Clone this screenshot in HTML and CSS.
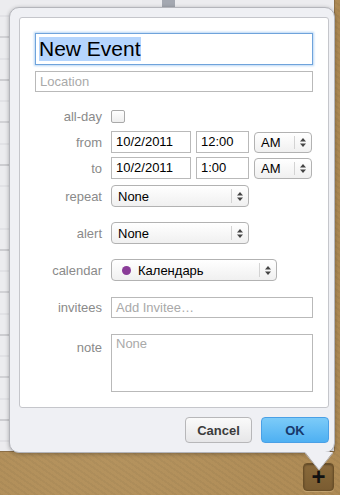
FILE: index.html
```html
<!DOCTYPE html>
<html lang="en">
<head>
    <meta charset="UTF-8">
    <meta name="viewport" content="width=device-width, initial-scale=1.0">
    <title>New Event</title>

    <link rel="stylesheet" href="styles.css">
</head>
<body>

    <div class="calendar">
        <div class="scroll-thumb"></div>
    </div>

    <div class="toolbar">
        <button class="add-btn">+</button>
    </div>

    <div class="popover">
        <div class="panel">
            <div class="title-field"><span class="selected">New Event</span></div>
            <div class="input location placeholder">Location</div>

            <div class="row allday">
                <span class="label">all-day</span>
                <span class="checkbox"></span>
            </div>

            <div class="row from">
                <span class="label">from</span>
                <div class="controls">
                    <div class="input date">10/2/2011</div>
                    <div class="input time">12:00</div>
                    <div class="select ampm"><span class="value">AM</span><span class="stepper"></span></div>
                </div>
            </div>

            <div class="row to">
                <span class="label">to</span>
                <div class="controls">
                    <div class="input date">10/2/2011</div>
                    <div class="input time">1:00</div>
                    <div class="select ampm"><span class="value">AM</span><span class="stepper"></span></div>
                </div>
            </div>

            <div class="row repeat">
                <span class="label">repeat</span>
                <div class="controls">
                    <div class="select wide"><span class="value">None</span><span class="stepper"></span></div>
                </div>
            </div>

            <div class="row alert">
                <span class="label">alert</span>
                <div class="controls">
                    <div class="select wide"><span class="value">None</span><span class="stepper"></span></div>
                </div>
            </div>

            <div class="row cal">
                <span class="label">calendar</span>
                <div class="controls">
                    <div class="select cal-select"><span class="value"><span class="dot"></span>Календарь</span><span class="stepper"></span></div>
                </div>
            </div>

            <div class="row invitees">
                <span class="label">invitees</span>
                <div class="input full placeholder">Add Invitee…</div>
            </div>

            <div class="row note">
                <span class="label">note</span>
                <div class="input textarea placeholder">None</div>
            </div>
        </div>

        <div class="actions">
            <button class="btn cancel">Cancel</button>
            <button class="btn ok">OK</button>
        </div>

        <svg class="arrow" width="28" height="19" viewBox="0 0 28 19">
            <polygon points="0,0 14,18 28,0" fill="#eff0f4"/>
            <polyline points="0,1 14,18 28,1" fill="none" stroke="#b4b5bb" stroke-width="1"/>
        </svg>
    </div>

    <script>
        // draw the up/down arrows into every select
        document.querySelectorAll('.stepper').forEach(el => {
            el.innerHTML = '<svg width="6" height="9" viewBox="0 0 6 9"><polygon points="3,0 6,3.5 0,3.5" fill="#444"/><polygon points="0,5.5 6,5.5 3,9" fill="#444"/></svg>';
        });
    </script>
</body>
</html>
```

FILE: styles.css
```css
body {
    font-family: "Liberation Sans", Arial, sans-serif;
    margin: 0;
    width: 340px;
    height: 495px;
    overflow: hidden;
    position: relative;
    background-color: #ad8953;
    background-image:
        radial-gradient(circle at 30% 80%, rgba(255, 240, 200, 0.12), transparent 60%),
        repeating-linear-gradient(35deg, rgba(0, 0, 0, 0.04) 0 2px, transparent 2px 5px);
}

.calendar {
    width: 335px;
    height: 452px;
    background-color: #ececef;
    background-image:
        repeating-linear-gradient(to bottom, transparent 0 41.5px, #b8b8bc 41.5px 42.5px),
        repeating-linear-gradient(to bottom, transparent 0 20.5px, #d8d8dc 20.5px 21.25px);
    background-position: 0 -4.5px, 0 -4.5px;
    box-shadow: inset -1px -1px 0 #8d7048;
}

.scroll-thumb {
    margin-left: 162px;
    width: 13px;
    height: 9px;
    background: #a4a8b1;
    border-radius: 0 0 2px 2px;
}

.toolbar {
    display: flex;
    justify-content: flex-end;
    padding: 11px 6px 0 0;
}

.add-btn {
    width: 31px;
    height: 28px;
    padding: 0;
    border: 1px solid #6a4f28;
    border-radius: 4px;
    background: linear-gradient(#8a6a3b, #7a5c31);
    box-shadow: inset 0 1px 2px rgba(0, 0, 0, 0.35), 0 1px 0 rgba(255, 235, 190, 0.25);
    color: #111;
    font-family: "Liberation Sans", Arial, sans-serif;
    font-size: 24px;
    font-weight: bold;
    line-height: 24px;
}

.popover {
    position: absolute;
    left: 9px;
    top: 7px;
    width: 326px;
    height: 446px;
    box-sizing: border-box;
    border: 1px solid #b4b5bb;
    border-radius: 10px;
    background: #eff0f4;
    padding: 9px 5px 0 9px;
    box-shadow: 0 1px 4px rgba(0, 0, 0, 0.3);
}

.panel {
    background: #fff;
    border: 1px solid #c5c6cb;
    border-radius: 3px;
    padding: 15px 15px 15px 0;
    display: flex;
    flex-direction: column;
}

.title-field {
    margin-left: 15px;
    height: 32px;
    box-sizing: border-box;
    border: 1px solid #6fa3db;
    box-shadow: 0 0 2px 1px #b9d7f5;
    padding: 3px 0 0 3px;
}

.selected {
    display: inline-block;
    background: #b5d5fd;
    color: #000;
    font-size: 21px;
    line-height: 24px;
}

.input {
    box-sizing: border-box;
    height: 21px;
    border: 1px solid #b9b9b9;
    background: #fff;
    font-size: 13px;
    line-height: 19px;
    padding: 0 4px;
    color: #000;
}

.placeholder {
    color: #a9a9a9;
}

.location {
    margin-left: 15px;
    margin-top: 6px;
}

.row {
    display: grid;
    grid-template-columns: 82px 1fr;
    column-gap: 9px;
    align-items: center;
}

.label {
    text-align: right;
    font-size: 13px;
    color: #8a8a8a;
}

.controls {
    display: flex;
    gap: 5px;
}

.allday {
    margin-top: 17px;
    height: 13px;
}

.checkbox {
    width: 14px;
    height: 13px;
    box-sizing: border-box;
    border: 1px solid #a9a9a9;
    border-radius: 2px;
    background: linear-gradient(#fff, #eee);
}

.from {
    margin-top: 9px;
}

.to {
    margin-top: 4px;
}

.from .controls,
.to .controls {
    height: 22px;
}

.date {
    width: 80px;
    height: 22px;
    line-height: 20px;
}

.time {
    width: 53px;
    height: 22px;
    line-height: 20px;
}

.select {
    box-sizing: border-box;
    height: 21px;
    border: 1px solid #b2b2b2;
    border-radius: 4px;
    background: linear-gradient(#fff, #f0f0f0);
    display: flex;
    font-size: 13px;
    color: #000;
}

.select .value {
    flex: 1;
    padding-left: 6px;
    line-height: 19px;
    display: flex;
    align-items: center;
}

.stepper {
    width: 16px;
    border-left: 1px solid #d3d3d3;
    margin: 3px 0;
    display: flex;
    align-items: center;
    justify-content: center;
}

.ampm {
    width: 58px;
    margin-top: 1px;
}

.wide {
    width: 138px;
    height: 22px;
}

.repeat {
    margin-top: 6px;
}

.alert {
    margin-top: 15px;
}

.cal {
    margin-top: 15px;
}

.cal-select {
    width: 166px;
    height: 22px;
}

.dot {
    width: 9px;
    height: 9px;
    border-radius: 50%;
    background: #8a3c98;
    margin: 0 7px 0 4px;
}

.invitees {
    margin-top: 16px;
}

.full {
    height: 21px;
}

.note {
    margin-top: 16px;
    align-items: start;
}

.note .label {
    padding-top: 6px;
}

.textarea {
    height: 58px;
    padding: 1px 4px;
    line-height: 16px;
}

.actions {
    display: flex;
    justify-content: flex-end;
    gap: 9px;
    margin-top: 9px;
}

.btn {
    height: 26px;
    padding: 0;
    border-radius: 4px;
    font-family: "Liberation Sans", Arial, sans-serif;
    font-size: 13px;
    font-weight: bold;
    cursor: pointer;
}

.cancel {
    width: 67px;
    border: 1px solid #b7b7b9;
    background: linear-gradient(#fafafa, #e6e6e8);
    color: #3b3b3b;
}

.ok {
    width: 68px;
    border: 1px solid #4aa0e6;
    background: linear-gradient(#7ccbf8, #4eb0f2);
    color: #17386c;
}

.arrow {
    position: absolute;
    left: 295px;
    top: 444px;
}
```
